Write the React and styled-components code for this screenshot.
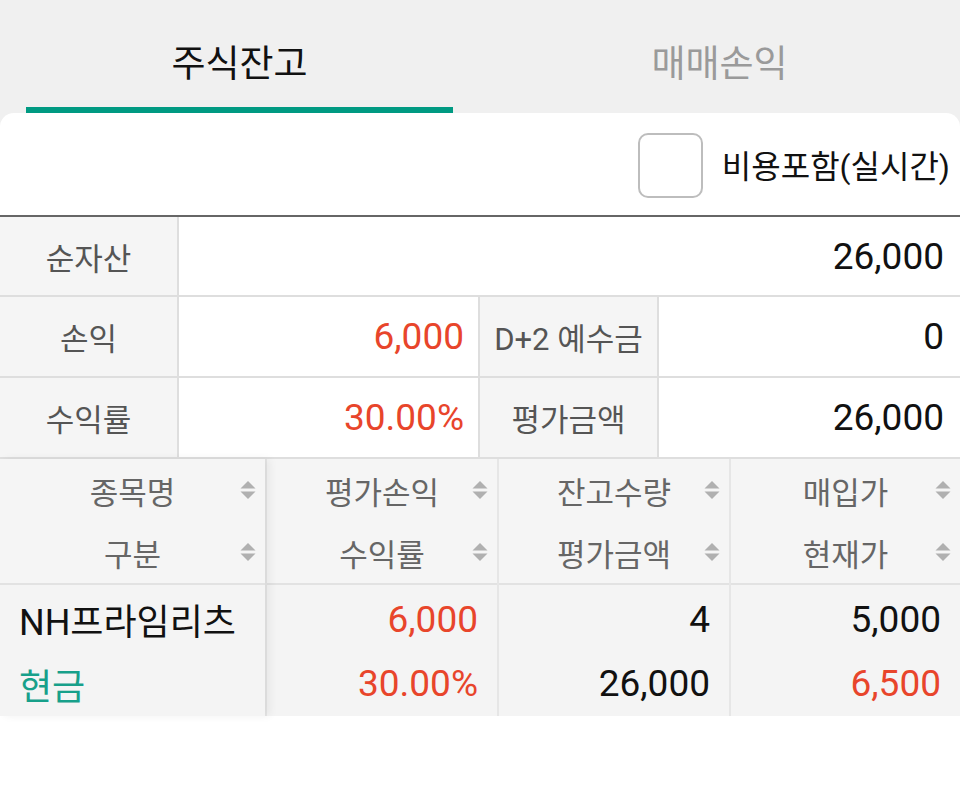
import React from 'react';
import styled, { createGlobalStyle } from 'styled-components';

const GlobalStyle = createGlobalStyle`
  body {
    margin: 0;
    background: #f0f0f0;
    font-family: Roboto, "Noto Sans CJK KR", sans-serif;
  }
`;

const Page = styled.div`
  width: 960px;
  min-height: 790px;
  display: flex;
  flex-direction: column;
`;

const TabBar = styled.div`
  display: grid;
  grid-template-columns: 1fr 1fr;
  height: 113px;
`;

const Tab = styled.div`
  display: flex;
  flex-direction: column;
  align-items: stretch;
  padding: 0 27px 0 26px;
`;

const TabLabel = styled.div`
  flex: 1;
  display: flex;
  align-items: center;
  justify-content: center;
  padding-top: 14px;
  font-size: 37px;
  color: ${(p) => (p.$active ? '#111' : '#9a9a9a')};
`;

const TabIndicator = styled.div`
  height: 6px;
  background: ${(p) => (p.$active ? '#009a82' : 'transparent')};
`;

const Card = styled.div`
  flex: 1;
  background: #fff;
  border-radius: 14px 14px 0 0;
`;

const OptionRow = styled.div`
  height: 102px;
  display: flex;
  align-items: center;
  justify-content: flex-end;
  gap: 19px;
  padding-right: 10px;
  border-bottom: 2px solid #666;
`;

const CheckBox = styled.div`
  width: 61px;
  height: 61px;
  border: 2px solid #bdbdbd;
  border-radius: 10px;
  margin-top: 2px;
`;

const OptionLabel = styled.span`
  font-size: 32px;
  color: #111;
`;

const SummaryGrid = styled.div`
  display: grid;
  grid-template-columns: 177px 299px 177px 1fr;
  grid-template-rows: 78px 79px 79px;
  gap: 2px;
  background: #dedede;
  border-bottom: 2px solid #dedede;
`;

const LabelCell = styled.div`
  display: flex;
  align-items: center;
  justify-content: center;
  background: #f5f5f5;
  color: #555;
  font-size: 31px;
`;

const ValueCell = styled.div`
  display: flex;
  align-items: center;
  justify-content: flex-end;
  padding-right: ${(p) => p.$pad || 14}px;
  background: #fff;
  font-size: 37px;
  color: ${(p) => (p.$red ? '#e8452b' : '#111')};
  grid-column: ${(p) => (p.$wide ? 'span 3' : 'auto')};
`;

const Holdings = styled.div`
  display: grid;
  grid-template-columns: 265px 230px 230px 1fr;
  column-gap: 2px;
  background: #e6e6e6;
`;

const Column = styled.div`
  display: flex;
  flex-direction: column;
  background: #f4f4f4;
  ${(p) =>
    p.$frozen &&
    `
    position: relative;
    z-index: 1;
    box-shadow: 5px 0 8px rgba(0, 0, 0, 0.06);
  `}
`;

const HeadBlock = styled.div`
  display: flex;
  flex-direction: column;
  border-bottom: 2px solid #e2e2e2;
  background: #f5f5f5;
`;

const HeadLine = styled.div`
  height: 62px;
  display: grid;
  grid-template-columns: 40px 1fr 40px;
  align-items: center;
  font-size: 31px;
  color: #666;
`;

const HeadText = styled.span`
  text-align: center;
`;

const SortWrap = styled.span`
  display: flex;
  justify-content: flex-end;
  padding-right: 9px;
`;

const DataBlock = styled.div`
  display: flex;
  flex-direction: column;
  height: 131px;
`;

const DataLine = styled.div`
  height: 65px;
  display: flex;
  align-items: center;
  justify-content: ${(p) => (p.$left ? 'flex-start' : 'flex-end')};
  padding: ${(p) => (p.$left ? '0 0 0 19px' : '0 19px 0 0')};
  font-size: ${(p) => (p.$left ? 36 : 37)}px;
  color: ${(p) => p.$color || '#111'};
  &:first-child {
    padding-top: 2px;
  }
`;

const Filler = styled.div`
  background: #fff;
  flex: 1;
`;

const SortIcon = () => (
  <svg width="16" height="20" viewBox="0 0 16 20">
    <polygon points="8,1 15.5,8.5 0.5,8.5" fill="#b0b0b0" />
    <polygon points="0.5,11.5 15.5,11.5 8,19" fill="#b0b0b0" />
  </svg>
);

const RED = '#e8452b';
const TEAL = '#17a08a';

const columns = [
  { heads: ['종목명', '구분'], lines: [['NH프라임리츠'], ['현금', TEAL]], left: true, frozen: true },
  { heads: ['평가손익', '수익률'], lines: [['6,000', RED], ['30.00%', RED]] },
  { heads: ['잔고수량', '평가금액'], lines: [['4'], ['26,000']] },
  { heads: ['매입가', '현재가'], lines: [['5,000'], ['6,500', RED]] },
];

export default function App() {
  return (
    <Page>
      <GlobalStyle />
      <TabBar>
        <Tab>
          <TabLabel $active>주식잔고</TabLabel>
          <TabIndicator $active />
        </Tab>
        <Tab>
          <TabLabel>매매손익</TabLabel>
          <TabIndicator />
        </Tab>
      </TabBar>
      <Card>
        <OptionRow>
          <CheckBox />
          <OptionLabel>비용포함(실시간)</OptionLabel>
        </OptionRow>
        <SummaryGrid>
          <LabelCell>순자산</LabelCell>
          <ValueCell $wide $pad={16}>26,000</ValueCell>
          <LabelCell>손익</LabelCell>
          <ValueCell $red>6,000</ValueCell>
          <LabelCell>D+2 예수금</LabelCell>
          <ValueCell $pad={16}>0</ValueCell>
          <LabelCell>수익률</LabelCell>
          <ValueCell $red>30.00%</ValueCell>
          <LabelCell>평가금액</LabelCell>
          <ValueCell $pad={16}>26,000</ValueCell>
        </SummaryGrid>
        <Holdings>
          {columns.map((col, i) => (
            <Column key={i} $frozen={col.frozen}>
              <HeadBlock>
                {col.heads.map((h) => (
                  <HeadLine key={h}>
                    <span />
                    <HeadText>{h}</HeadText>
                    <SortWrap>
                      <SortIcon />
                    </SortWrap>
                  </HeadLine>
                ))}
              </HeadBlock>
              <DataBlock>
                {col.lines.map(([text, color]) => (
                  <DataLine key={text} $left={col.left} $color={color}>
                    {text}
                  </DataLine>
                ))}
              </DataBlock>
            </Column>
          ))}
        </Holdings>
        <Filler />
      </Card>
    </Page>
  );
}
